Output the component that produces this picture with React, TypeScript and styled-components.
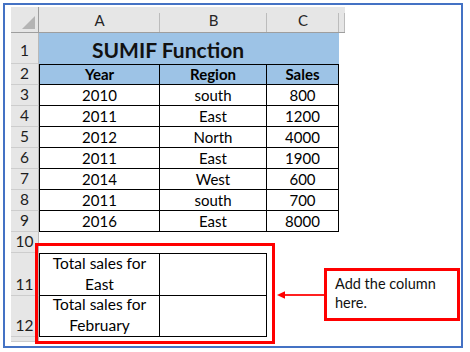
import * as React from 'react';
import styled, { createGlobalStyle, css } from 'styled-components';

const GlobalStyle = createGlobalStyle`
  html, body {
    margin: 0;
    padding: 0;
    background: #ffffff;
  }
  body {
    font-family: "Lato", "Liberation Sans", sans-serif;
    color: #000000;
  }
`;

const Frame = styled.div`
  position: relative;
  box-sizing: border-box;
  width: 460px;
  height: 345px;
  margin: 3px 0 0 3px;
  padding: 2px 0 0 6px;
  border: 2px solid #4472c4;
  background: #ffffff;
`;

const Sheet = styled.div`
  display: grid;
  grid-template-columns: 28px 121px 107px 72px 6px;
  grid-template-rows: 26px 31px repeat(9, 21px) 43px 41px 5px;
  width: 334px;
  font-size: 15px;
`;

const Corner = styled.div`
  position: relative;
  background: #e6e6e6;
  border-bottom: 1px solid #9e9e9e;
  border-right: 1px solid #9e9e9e;
  box-sizing: border-box;
  &::after {
    content: '';
    position: absolute;
    right: 3px;
    bottom: 3px;
    width: 0;
    height: 0;
    border-left: 13px solid transparent;
    border-bottom: 13px solid #b4b4b4;
  }
`;

const ColHead = styled.div`
  display: flex;
  align-items: flex-end;
  justify-content: center;
  padding-bottom: 3px;
  box-sizing: border-box;
  background: #e6e6e6
    linear-gradient(#bcbcbc, #bcbcbc) right 6px / 1px calc(100% - 6px) no-repeat;
  border-bottom: 1px solid #9e9e9e;
  color: #262626;
  font-size: 15px;
`;

const RowHead = styled.div<{ $pad?: number }>`
  display: flex;
  align-items: flex-end;
  justify-content: center;
  box-sizing: border-box;
  padding-bottom: ${(p) => p.$pad ?? 2}px;
  background: #e6e6e6;
  border-right: 1px solid #b8b8b8;
  border-bottom: 1px solid #cdcdcd;
  color: #1e1e1e;
  font-size: 15.5px;
`;

const Cell = styled.div<{
  $box?: boolean;
  $top?: boolean;
  $left?: boolean;
  $bold?: boolean;
  $fill?: boolean;
  $lines?: boolean;
}>`
  display: flex;
  align-items: flex-end;
  justify-content: center;
  box-sizing: border-box;
  padding-bottom: ${(p) => (p.$lines ? 0 : 1)}px;
  text-align: center;
  white-space: nowrap;
  font-weight: ${(p) => (p.$bold ? 700 : 400)};
  background: ${(p) => (p.$fill ? '#9dc3e6' : '#ffffff')};
  ${(p) =>
    p.$box &&
    css`
      border-right: 1px solid #000;
      border-bottom: 1px solid #000;
    `}
  ${(p) => p.$top && css`border-top: 1px solid #000;`}
  ${(p) => p.$left && css`border-left: 1px solid #000;`}
  ${(p) => p.$lines && css`line-height: 21px; font-size: 15.5px;`}
`;

const TitleCell = styled.div`
  grid-column: span 3;
  display: flex;
  align-items: flex-end;
  padding: 0 0 2px 53px;
  box-sizing: border-box;
  background: #9dc3e6;
  font-size: 21px;
  font-weight: 700;
  color: #111;
`;

const Highlight = styled.div`
  position: absolute;
  left: 30px;
  top: 238px;
  width: 240px;
  height: 101px;
  box-sizing: border-box;
  border: 3px solid #ff0000;
`;

const Arrow = styled.svg`
  position: absolute;
  left: 271px;
  top: 285px;
`;

const Callout = styled.div`
  position: absolute;
  left: 319px;
  top: 263px;
  width: 136px;
  height: 53px;
  box-sizing: border-box;
  border: 3px solid #ff0000;
  padding: 4px 8px 0 8px;
  font-size: 14.5px;
  line-height: 18.5px;
  color: #111;
`;

const data: [string, string, string][] = [
  ['2010', 'south', '800'],
  ['2011', 'East', '1200'],
  ['2012', 'North', '4000'],
  ['2011', 'East', '1900'],
  ['2014', 'West', '600'],
  ['2011', 'south', '700'],
  ['2016', 'East', '8000'],
];

const totals: [string, string][] = [
  ['Total sales for', 'East'],
  ['Total sales for', 'February'],
];

export default function App() {
  return (
    <>
      <GlobalStyle />
      <Frame>
        <Sheet>
          <Corner />
          {['A', 'B', 'C', ''].map((c, i) => (
            <ColHead key={i}>{c}</ColHead>
          ))}

          <RowHead $pad={4}>1</RowHead>
          <TitleCell>SUMIF Function</TitleCell>
          <Cell />

          <RowHead>2</RowHead>
          <Cell $box $top $left $bold $fill>Year</Cell>
          <Cell $box $top $bold $fill>Region</Cell>
          <Cell $box $top $bold $fill>Sales</Cell>
          <Cell />

          {data.map((row, r) => (
            <React.Fragment key={r}>
              <RowHead>{r + 3}</RowHead>
              <Cell $box $left>{row[0]}</Cell>
              <Cell $box>{row[1]}</Cell>
              <Cell $box>{row[2]}</Cell>
              <Cell />
            </React.Fragment>
          ))}

          <RowHead>10</RowHead>
          <Cell />
          <Cell />
          <Cell />
          <Cell />

          {totals.map((t, r) => (
            <React.Fragment key={r}>
              <RowHead>{r + 11}</RowHead>
              <Cell $box $left $top={r === 0} $lines>
                <span>
                  {t[0]}
                  <br />
                  {t[1]}
                </span>
              </Cell>
              <Cell $box $top={r === 0} />
              <Cell />
              <Cell />
            </React.Fragment>
          ))}

          <RowHead />
          <Cell />
          <Cell />
          <Cell />
          <Cell />
        </Sheet>

        <Highlight />
        <Arrow width="50" height="10" viewBox="0 0 50 10">
          <line x1="7" y1="5" x2="50" y2="5" stroke="#ff2020" strokeWidth="2.2" />
          <polygon points="1,5 9,1.2 9,8.8" fill="#ff0000" />
        </Arrow>
        <Callout>
          Add the column
          <br />
          here.
        </Callout>
      </Frame>
    </>
  );
}
